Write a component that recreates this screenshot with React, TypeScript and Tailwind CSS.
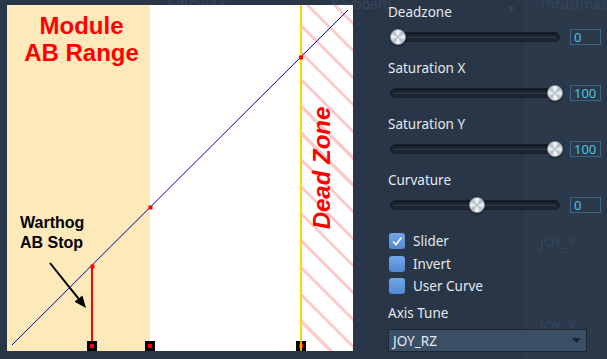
import React from 'react'

const sliders = [
  { label: 'Deadzone', pct: 0, value: '0' },
  { label: 'Saturation X', pct: 1, value: '100' },
  { label: 'Saturation Y', pct: 1, value: '100' },
  { label: 'Curvature', pct: 0.5, value: '0' },
]

const checks = [
  { label: 'Slider', on: true },
  { label: 'Invert', on: false },
  { label: 'User Curve', on: false },
]

function Slider({ pct }: { pct: number }) {
  return (
    <div className="relative w-[174px] h-[16px] flex items-center">
      <div className="mx-[2px] flex-1 h-[10px] rounded-full bg-[#1c2531] border border-[#18202a] shadow-[inset_0_1px_1px_rgba(0,0,0,0.5)] flex items-center px-[4px]">
        <div className="flex-1 h-[1px] bg-[#2f3c4b]" />
      </div>
      <div
        className="absolute top-0 w-[16px] h-[16px] rounded-full border border-[#8c96a2] bg-[conic-gradient(#ffffff,#aeb7c2,#f4f6f8,#b4bcc6,#ffffff,#aeb7c2,#f4f6f8,#b4bcc6,#ffffff)] shadow-[0_1px_2px_rgba(0,0,0,0.5)]"
        style={{ left: 2 + pct * 157 }}
      />
    </div>
  )
}

function Chart() {
  return (
    <div className="relative w-[346px] h-[346px] flex font-['Liberation_Sans',Arial,sans-serif]">
      <div className="w-[143px] bg-[#fee9ba]" />
      <div className="w-[150px] bg-white" />
      <div className="w-[2px] bg-[#ffd700]" />
      <div className="flex-1 bg-[repeating-linear-gradient(45deg,#ffcaca_0px,#ffcaca_3px,#ffffff_3px,#ffffff_19px)]" />

      <svg className="absolute inset-0" width="346" height="346" viewBox="0 0 346 346">
        <line x1="5" y1="340" x2="341" y2="5" stroke="#0000a8" strokeWidth="1" />
        <line x1="85" y1="261" x2="85" y2="341" stroke="#ff0000" strokeWidth="2" />
        <rect x="83.5" y="259.5" width="4" height="4" fill="#ff0000" />
        <rect x="141.5" y="200.5" width="4" height="4" fill="#ff0000" />
        <rect x="292" y="50.5" width="4" height="4" fill="#ff0000" />
        <rect x="80" y="336" width="10" height="10" fill="#000" />
        <rect x="83" y="339" width="4" height="4" fill="#ff0000" />
        <rect x="138" y="336" width="10" height="10" fill="#000" />
        <rect x="141" y="339" width="4" height="4" fill="#ff0000" />
        <rect x="289" y="336" width="10" height="10" fill="#000" />
        <rect x="292" y="339" width="4" height="4" fill="#ff0000" />
        <rect x="293" y="336" width="2" height="10" fill="#ffd700" opacity="0.8" />
        <line x1="43" y1="258" x2="71.5" y2="293.6" stroke="#000" strokeWidth="2" />
        <polygon points="79,303 75.4,290.5 67.6,296.7" fill="#000" />
      </svg>

      <div className="absolute left-[3px] top-[7px] w-[143px] text-center text-[24px] leading-[27px] font-bold text-[#ff0000]">
        Module
        <br />
        AB Range
      </div>
      <div className="absolute left-[13px] top-[208px] text-[16px] leading-[20px] font-bold text-black">
        Warthog
        <br />
        AB Stop
      </div>
      <div className="absolute left-[315px] top-[163px] -translate-x-1/2 -translate-y-1/2 -rotate-90 whitespace-nowrap text-[24px] font-bold italic text-[#ff0000]">
        Dead Zone
      </div>
    </div>
  )
}

export default function App() {
  return (
    <div className="relative w-[607px] h-[359px] overflow-hidden bg-[#293647] flex font-['Noto_Sans',sans-serif]">
      {/* dimmed table behind the panel */}
      <div className="absolute inset-0 text-[13.5px] text-[#35475a]">
        <div className="absolute left-[522px] top-0 bottom-0 right-0 bg-[#2b394a] border-l border-[#263242]">
          <div className="mt-[252px] border-t border-[#2f3e50]" />
          <div className="mt-[20px] border-t border-[#2f3e50]" />
          <div className="mt-[20px] border-t border-[#2f3e50]" />
          <div className="mt-[21px] border-t border-[#2f3e50]" />
          <div className="mt-[20px] border-t border-[#2f3e50]" />
        </div>
        <span className="absolute left-[168px] top-[-9px]">Category</span>
        <span className="absolute left-[331px] top-[-6px]">Keyboard</span>
        <span className="absolute left-[507px] top-[2px] text-[9px]">▼</span>
        <span className="absolute left-[539px] top-[-6px]">Thrustmaster</span>
        <span className="absolute left-[540px] top-[232px]">JOY_Y</span>
        <span className="absolute left-[540px] top-[316px]">JOY_X</span>
      </div>

      <div className="relative pl-[7px] pt-[5px]">
        <Chart />
      </div>

      <div className="relative ml-[35px] w-[213px] pt-[2px] flex flex-col text-[13.5px] text-[#e4e9ee]">
        <div className="flex flex-col gap-[13px]">
          {sliders.map((s) => (
            <div key={s.label} className="flex flex-col">
              <div className="h-[20px] leading-[20px]">{s.label}</div>
              <div className="mt-[7px] flex items-center">
                <Slider pct={s.pct} />
                <div className="ml-[8px] w-[31px] h-[16px] border border-[#3f6584] pl-[3px] text-[13px] leading-[14px] text-[#4ec2ea]">
                  {s.value}
                </div>
              </div>
            </div>
          ))}
        </div>

        <div className="mt-[20px] flex flex-col gap-[6.5px]">
          {checks.map((c) => (
            <div key={c.label} className="flex items-center h-[16px]">
              <div className="w-[16px] h-[16px] ml-[1px] rounded-[3px] bg-[linear-gradient(#72a6e6,#5189d4)] flex items-center justify-center">
                {c.on && (
                  <svg width="12" height="12" viewBox="0 0 12 12">
                    <path d="M2 6.5 L5 9.5 L10.5 2.5" fill="none" stroke="#ffffff" strokeWidth="1.6" />
                  </svg>
                )}
              </div>
              <span className="ml-[8px] leading-[16px]">{c.label}</span>
            </div>
          ))}
        </div>

        <div className="mt-[9px] h-[20px] leading-[20px]">Axis Tune</div>
        <div className="mt-[6px] w-[199px] h-[23px] bg-[#3a4e65] border border-[#1c2633] flex items-center justify-between pl-[4px] pr-[5px]">
          <span className="leading-[20px]">JOY_RZ</span>
          <svg width="9" height="5" viewBox="0 0 9 5">
            <polygon points="0,0 9,0 4.5,5" fill="#1a232e" />
          </svg>
        </div>
      </div>
    </div>
  )
}
